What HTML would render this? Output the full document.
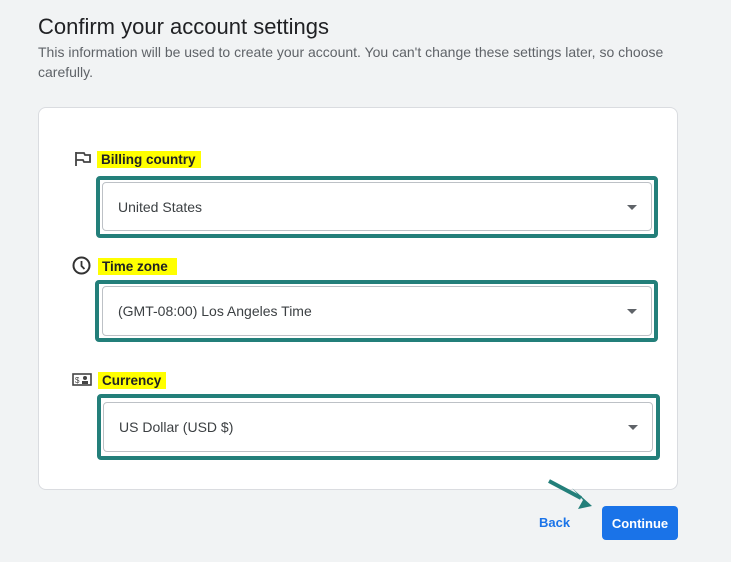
<!DOCTYPE html><html><head><style>
body{margin:0;width:731px;height:562px;background:#f1f3f4;font-family:"Liberation Sans",sans-serif;position:relative;overflow:hidden}
.a{position:absolute}
.h1{left:38px;top:14px;font-size:22px;color:#202124}
.sub{left:38px;top:42px;width:660px;font-size:14px;line-height:20px;color:#5f6368}
.card{left:38px;top:107px;width:638px;height:381px;background:#fff;border:1px solid #dadce0;border-radius:8px}
.tb{border:4px solid #237f7a;border-radius:4px;box-sizing:border-box}
.sel{border:1px solid #bdc1c6;border-radius:4px;box-sizing:border-box;font-size:14px;color:#3c4043;padding-left:15px;display:flex;align-items:center}
.sel:after{content:"";position:absolute;right:14px;top:50%;margin-top:-2px;border:5px solid transparent;border-top:5px solid #5f6368;border-bottom:0}
.lab{background:#ffff00;font-size:13.5px;font-weight:bold;color:#202124;padding:0 5px 0 4px;line-height:17px}
</style></head><body>
<div class="a h1">Confirm your account settings</div>
<div class="a sub">This information will be used to create your account. You can't change these settings later, so choose carefully.</div>
<div class="a card"></div>

<svg class="a" style="left:74px;top:151px" width="18" height="16" viewBox="0 0 18 16"><path d="M2 1v14M2 2h8l1 2h5v7h-6l-1-2H2" fill="none" stroke="#444" stroke-width="1.8"/></svg>
<div class="a lab" style="left:97px;top:151px">Billing country</div>
<div class="a tb" style="left:96px;top:176px;width:562px;height:62px"></div>
<div class="a sel" style="left:102px;top:182px;width:550px;height:49px">United States</div>

<svg class="a" style="left:72px;top:256px" width="19" height="19" viewBox="0 0 19 19"><circle cx="9.5" cy="9.5" r="8" fill="none" stroke="#333" stroke-width="2"/><path d="M9.5 5v5l3 3" fill="none" stroke="#333" stroke-width="1.8"/></svg>
<div class="a lab" style="left:98px;top:258px">Time zone&nbsp;</div>
<div class="a tb" style="left:95px;top:280px;width:563px;height:62px"></div>
<div class="a sel" style="left:102px;top:286px;width:550px;height:50px">(GMT-08:00) Los Angeles Time</div>

<svg class="a" style="left:72px;top:373px" width="20" height="13" viewBox="0 0 20 13"><rect x="1" y="1" width="18" height="11" fill="none" stroke="#444" stroke-width="1.6"/><text x="3" y="10" font-size="8" font-family="Liberation Sans" fill="#444">$</text><circle cx="13" cy="5" r="2" fill="#444"/><rect x="10" y="8" width="6" height="3" fill="#444"/></svg>
<div class="a lab" style="left:98px;top:372px">Currency</div>
<div class="a tb" style="left:97px;top:394px;width:563px;height:66px"></div>
<div class="a sel" style="left:103px;top:402px;width:550px;height:50px">US Dollar (USD $)</div>

<svg class="a" style="left:545px;top:476px" width="52" height="34" viewBox="0 0 52 34"><path d="M4 5L36 22" stroke="#237f7a" stroke-width="4"/><path d="M27 12L47 30L33 33L38 24Z" fill="#237f7a"/></svg>
<div class="a" style="left:539px;top:515px;font-size:13px;font-weight:bold;color:#1a73e8">Back</div>
<div class="a" style="left:602px;top:506px;width:76px;height:34px;background:#1a73e8;border-radius:4px;color:#fff;font-size:13px;font-weight:bold;display:flex;align-items:center;justify-content:center">Continue</div>
</body></html>
